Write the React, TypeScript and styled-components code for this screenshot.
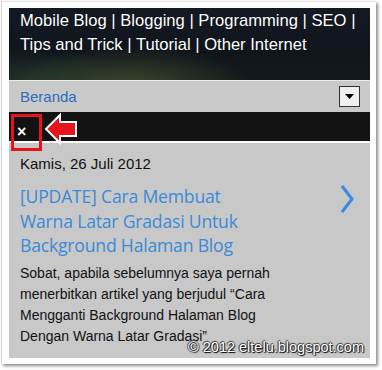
import React from "react";
import styled, { createGlobalStyle } from "styled-components";

const Global = createGlobalStyle`
  html, body { margin: 0; padding: 0; background: #fff; }
  body { width: 382px; height: 370px; overflow: hidden; font-family: "Liberation Sans", Arial, sans-serif; }
`;

const Photo = styled.div`
  position: relative;
  margin: 1px 0 0 1px;
  width: 375px;
  height: 363px;
  box-sizing: border-box;
  background: #fff;
  border-left: 1px solid #d6d6d6;
  border-top: 1px solid #e2e2e2;
  box-shadow: 2px 2px 3px rgba(0, 0, 0, 0.45);
  padding: 6px 6px 6px 7px;
`;

const Screen = styled.div`
  position: relative;
  width: 361px;
  height: 350px;
  overflow: hidden;
  display: flex;
  flex-direction: column;
  background: #c8c8c8;
`;

const Header = styled.div`
  height: 72px;
  box-sizing: border-box;
  padding: 1px 4px 0 11px;
  background:
    radial-gradient(ellipse 120px 40px at 120px 78px, rgba(90, 110, 60, 0.55), transparent),
    radial-gradient(ellipse 90px 30px at 20px 70px, rgba(40, 70, 60, 0.5), transparent),
    linear-gradient(180deg, #141a24 0%, #10151c 60%, #141a1a 100%);
  color: #fff;
  font-size: 16.6px;
  line-height: 24px;
  white-space: nowrap;
  text-shadow: 0 0 1px rgba(0,0,0,0.6);
`;

const NavBar = styled.div`
  height: 32px;
  box-sizing: border-box;
  border-top: 1px solid #e8e8e8;
  background: #c9c9c9;
  display: flex;
  align-items: center;
  justify-content: space-between;
  padding: 0 10px 0 11px;
`;

const NavLink = styled.span`
  color: #2f6db8;
  font-size: 15px;
`;

const Dropdown = styled.div`
  width: 21px;
  height: 21px;
  box-sizing: border-box;
  border: 1px solid #333;
  background: #f0f0f0;
  display: flex;
  align-items: center;
  justify-content: center;
`;

const BlackBar = styled.div`
  height: 29px;
  background: #121212;
  border-bottom: 2px solid #fafafa;
  display: flex;
  align-items: center;
  padding-left: 8px;
`;

const CloseX = styled.span`
  color: #fff;
  font-size: 16px;
  font-weight: bold;
  line-height: 1;
  margin-top: 10px;
`;

const Content = styled.div`
  flex: 1;
  padding: 11px 11px 0 11px;
  position: relative;
`;

const DateLine = styled.div`
  color: #111;
  font-size: 15px;
  line-height: 20px;
`;

const PostRow = styled.div`
  display: flex;
  align-items: flex-start;
  justify-content: space-between;
  margin-top: 10px;
`;

const PostTitle = styled.div`
  color: #3a8ad8;
  font-family: "Open Sans", "DejaVu Sans", sans-serif;
  font-size: 17.6px;
  line-height: 24.5px;
  letter-spacing: -0.2px;
`;

const Chevron = styled.svg`
  margin-right: 5px;
  margin-top: 1px;
`;

const Excerpt = styled.div`
  margin-top: 5px;
  color: #111;
  font-size: 14px;
  line-height: 21.3px;
`;

const Annotation = styled.div`
  position: absolute;
  left: 9px;
  top: 112px;
  width: 31px;
  height: 37px;
  box-sizing: border-box;
  border: 3px solid #e8141c;
`;

const Arrow = styled.svg`
  position: absolute;
  left: 41px;
  top: 110px;
`;

const Watermark = styled.div`
  position: absolute;
  right: 12px;
  bottom: 9px;
  color: #fff;
  font-size: 14.5px;
  text-shadow: 1px 1px 1px #000, -1px 0 1px #333, 0 -1px 1px #333;
`;

export default function App() {
  return (
    <>
      <Global />
      <Photo>
        <Screen>
          <Header>
            Mobile Blog | Blogging | Programming | SEO |<br />
            Tips and Trick | Tutorial | Other Internet
          </Header>
          <NavBar>
            <NavLink>Beranda</NavLink>
            <Dropdown>
              <svg width="9" height="5" viewBox="0 0 9 5">
                <polygon points="0,0 9,0 4.5,5" fill="#000" />
              </svg>
            </Dropdown>
          </NavBar>
          <BlackBar>
            <CloseX>×</CloseX>
          </BlackBar>
          <Content>
            <DateLine>Kamis, 26 Juli 2012</DateLine>
            <PostRow>
              <PostTitle>
                [UPDATE] Cara Membuat<br />
                Warna Latar Gradasi Untuk<br />
                Background Halaman Blog
              </PostTitle>
              <Chevron width="14" height="28" viewBox="0 0 14 28">
                <polyline points="2,1 12,14 2,27" fill="none" stroke="#3a8ae0" strokeWidth="3" />
              </Chevron>
            </PostRow>
            <Excerpt>
              Sobat, apabila sebelumnya saya pernah<br />
              menerbitkan artikel yang berjudul “Cara<br />
              Mengganti Background Halaman Blog<br />
              Dengan Warna Latar Gradasi”
            </Excerpt>
          </Content>
        </Screen>
        <Annotation />
        <Arrow width="36" height="34" viewBox="0 0 36 34">
          <polygon
            points="3,17 17,3 17,10 33,10 33,24 17,24 17,31"
            fill="#e8141c"
            stroke="#fff"
            strokeWidth="2"
            strokeLinejoin="miter"
          />
        </Arrow>
        <Watermark>© 2012 eltelu.blogspot.com</Watermark>
      </Photo>
    </>
  );
}
